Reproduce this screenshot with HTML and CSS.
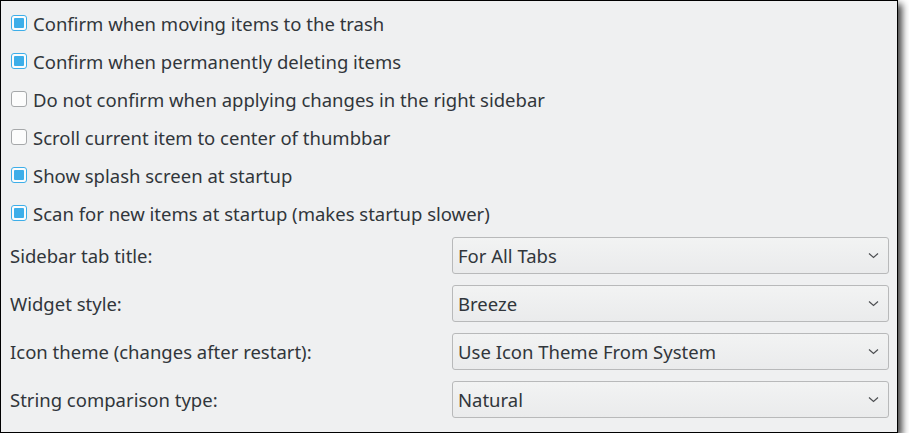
FILE: index.html
```html
<!DOCTYPE html>
<html>
<head>
<meta charset="utf-8">
<link rel="stylesheet" href="styles.css">
</head>
<body>
<div class="window">
  <div class="checks">
    <label class="check"><span class="box on"></span><span>Confirm when moving items to the trash</span></label>
    <label class="check"><span class="box on"></span><span>Confirm when permanently deleting items</span></label>
    <label class="check"><span class="box"></span><span>Do not confirm when applying changes in the right sidebar</span></label>
    <label class="check"><span class="box"></span><span>Scroll current item to center of thumbbar</span></label>
    <label class="check"><span class="box on"></span><span>Show splash screen at startup</span></label>
    <label class="check"><span class="box on"></span><span>Scan for new items at startup (makes startup slower)</span></label>
  </div>
  <div class="form">
    <div class="label">Sidebar tab title:</div>
    <div class="combo"><span>For All Tabs</span><svg class="chev" width="11" height="7" viewBox="0 0 11 7"><path d="M1 1.5 L5.5 5.5 L10 1.5" fill="none" stroke="#4d4f52" stroke-width="1.2"/></svg></div>
    <div class="label">Widget style:</div>
    <div class="combo"><span>Breeze</span><svg class="chev" width="11" height="7" viewBox="0 0 11 7"><path d="M1 1.5 L5.5 5.5 L10 1.5" fill="none" stroke="#4d4f52" stroke-width="1.2"/></svg></div>
    <div class="label">Icon theme (changes after restart):</div>
    <div class="combo"><span>Use Icon Theme From System</span><svg class="chev" width="11" height="7" viewBox="0 0 11 7"><path d="M1 1.5 L5.5 5.5 L10 1.5" fill="none" stroke="#4d4f52" stroke-width="1.2"/></svg></div>
    <div class="label">String comparison type:</div>
    <div class="combo"><span>Natural</span><svg class="chev" width="11" height="7" viewBox="0 0 11 7"><path d="M1 1.5 L5.5 5.5 L10 1.5" fill="none" stroke="#4d4f52" stroke-width="1.2"/></svg></div>
  </div>
</div>
</body>
</html>
```

FILE: styles.css
```css
html, body {
  margin: 0;
  padding: 0;
  background: #ffffff;
}
body {
  font-family: "Noto Sans", "Open Sans", sans-serif;
  font-size: 18.5px;
  color: #31363b;
}
.window {
  width: 898px;
  height: 433px;
  box-sizing: border-box;
  border: 1px solid #000;
  background: #eff0f1;
  box-shadow: 4px 4px 7px rgba(0,0,0,0.75);
  padding: 3px 8px 0 9px;
}
.checks {
  display: flex;
  flex-direction: column;
}
.check {
  height: 38px;
  display: flex;
  align-items: center;
  gap: 6px;
  padding-left: 1px;
}
.box {
  width: 16px;
  height: 16px;
  box-sizing: border-box;
  border: 1px solid #a6a8aa;
  border-radius: 3px;
  background: #fcfcfc;
  position: relative;
  flex: none;
}
.box.on {
  border-color: #3daee9;
}
.box.on::after {
  content: "";
  position: absolute;
  left: 2px;
  top: 2px;
  width: 10px;
  height: 10px;
  background: #3daee9;
  border-radius: 1px;
}
.form {
  margin-top: 5px;
  display: grid;
  grid-template-columns: 442px 437px;
  row-gap: 11px;
  align-items: center;
}
.combo {
  height: 37px;
  box-sizing: border-box;
  border: 1px solid #b8b9ba;
  border-radius: 3px;
  background: linear-gradient(#f2f3f3, #eaebec);
  display: flex;
  align-items: center;
  justify-content: space-between;
  padding: 0 9px 0 5px;
}
.chev {
  display: block;
}
```
